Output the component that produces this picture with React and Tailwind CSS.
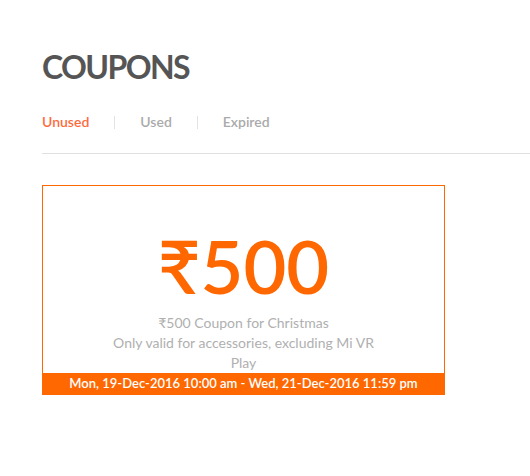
export default function App() {
  const tabs = [
    { label: "Unused", active: true },
    { label: "Used" },
    { label: "Expired" },
  ];

  return (
    <div className="min-h-[476px] bg-white pl-[42px] pt-[47px] font-['Lato',sans-serif]">
      <h1 className="text-[32px] leading-[40px] font-bold tracking-[-1.6px] text-[#555555]">COUPONS</h1>

      <div className="mt-[27px] flex items-center text-[14px] leading-[16px] font-semibold">
        {tabs.map((t, i) => (
          <div key={t.label} className="flex items-center">
            {i > 0 && <span className="mx-[25px] h-[13px] w-px bg-[#e2e2e2]" />}
            <span className={t.active ? "text-[#ff6a3d]" : "text-[#aaaaaa]"}>{t.label}</span>
          </div>
        ))}
      </div>

      <div className="mt-[23px] h-px bg-[#e0e0e0]" />

      {/* coupon card */}
      <div className="mt-[31px] w-[403px] border border-[#ff6700]">
        <div className="flex flex-col items-center px-[60px] pt-[38px] text-center">
          <div className="text-[74px] leading-[84px] font-semibold text-[#ff6700]">₹500</div>
          <div className="mt-[5px] text-[14px] leading-[20px] text-[#b0b0b0]">
            <p>₹500 Coupon for Christmas</p>
            <p>Only valid for accessories, excluding Mi VR Play</p>
          </div>
        </div>
        <div className="bg-[#ff6700] py-[2px] text-center text-[13px] leading-[17px] font-semibold text-white">
          Mon, 19-Dec-2016 10:00 am - Wed, 21-Dec-2016 11:59 pm
        </div>
      </div>
    </div>
  );
}
